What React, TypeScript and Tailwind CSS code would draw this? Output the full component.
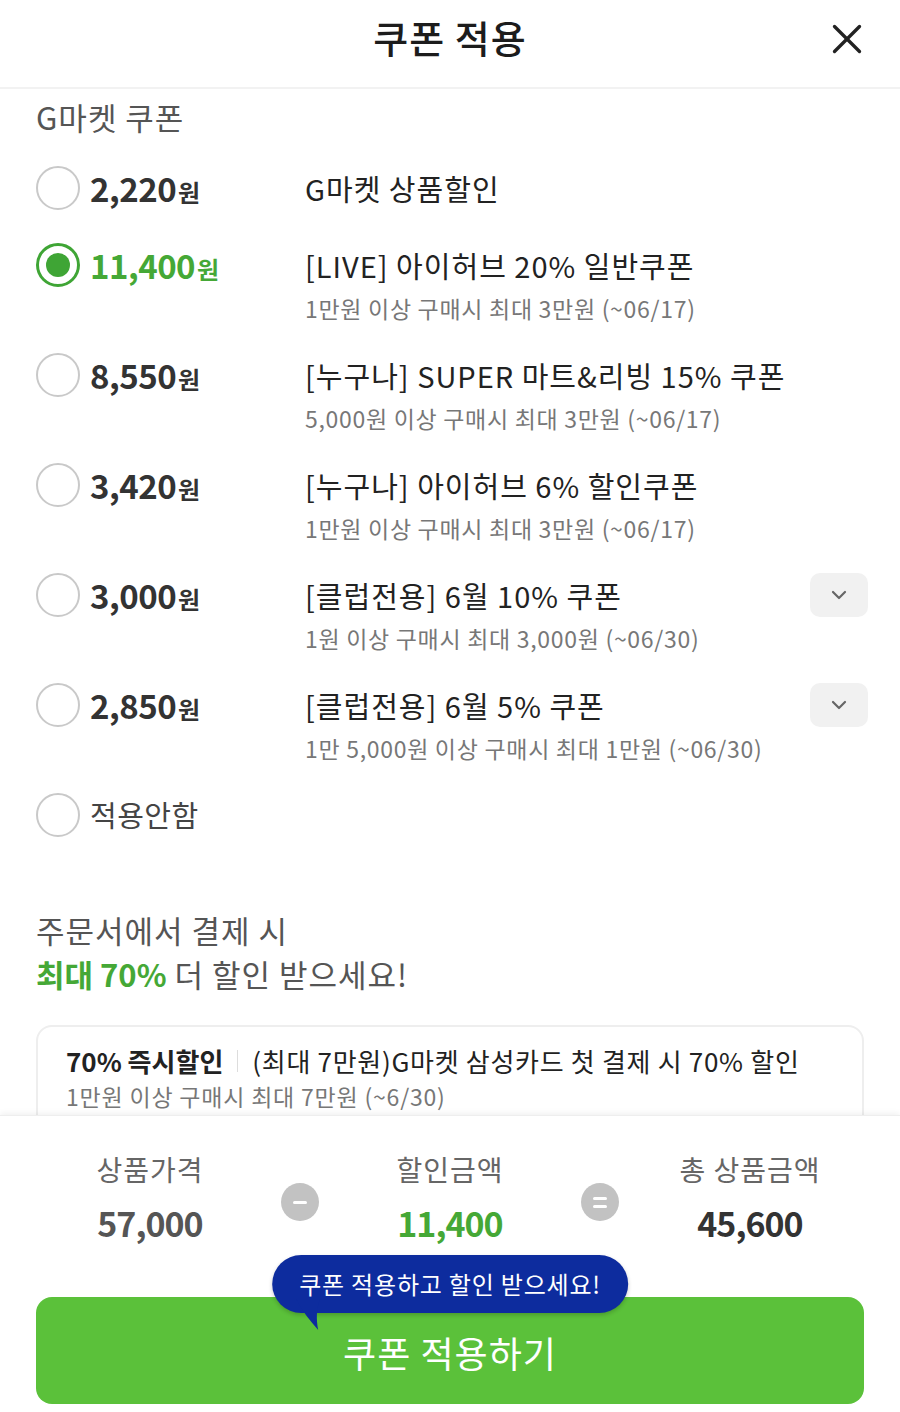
import { X, ChevronDown } from 'lucide-react';

const font = { fontFamily: '"Noto Sans CJK KR", "Noto Sans", sans-serif' };

type Coupon = {
    amount: string;
    title: string;
    sub?: string;
    selected?: boolean;
    expandable?: boolean;
};

const coupons: Coupon[] = [
    { amount: '2,220', title: 'G마켓 상품할인' },
    { amount: '11,400', title: '[LIVE] 아이허브 20% 일반쿠폰', sub: '1만원 이상 구매시 최대 3만원 (~06/17)', selected: true },
    { amount: '8,550', title: '[누구나] SUPER 마트&리빙 15% 쿠폰', sub: '5,000원 이상 구매시 최대 3만원 (~06/17)' },
    { amount: '3,420', title: '[누구나] 아이허브 6% 할인쿠폰', sub: '1만원 이상 구매시 최대 3만원 (~06/17)' },
    { amount: '3,000', title: '[클럽전용] 6월 10% 쿠폰', sub: '1원 이상 구매시 최대 3,000원 (~06/30)', expandable: true },
    { amount: '2,850', title: '[클럽전용] 6월 5% 쿠폰', sub: '1만 5,000원 이상 구매시 최대 1만원 (~06/30)', expandable: true },
];

function Radio({ on }: { on?: boolean }) {
    if (on) {
        return (
            <div className="w-[44px] h-[44px] shrink-0 rounded-full border-[3px] border-[#3fa535] flex items-center justify-center">
                <div className="w-[24px] h-[24px] rounded-full bg-[#3fa535]" />
            </div>
        );
    }
    return <div className="w-[44px] h-[44px] shrink-0 rounded-full border-2 border-[#c9c9c9] bg-white" />;
}

function CouponRow({ c }: { c: Coupon }) {
    return (
        <div className={c.sub ? 'mb-[29px]' : 'mb-[33px]'}>
            <div className="flex items-center h-[44px]">
                <Radio on={c.selected} />
                <div className={`ml-[10px] w-[215px] shrink-0 flex items-baseline font-bold ${c.selected ? 'text-[#45a836]' : 'text-[#333]'}`}>
                    <span className="text-[33px] leading-none tracking-[-0.5px]">{c.amount}</span>
                    <span className="text-[24px] leading-none ml-[2px]">원</span>
                </div>
                <div className="flex-1 text-[29px] tracking-[1px] text-[#222] leading-none">{c.title}</div>
                {c.expandable && (
                    <div className="w-[58px] h-[44px] -mr-[4px] rounded-[10px] bg-[#f1f1f1] flex items-center justify-center">
                        <ChevronDown size={24} strokeWidth={2.2} className="text-[#666]" />
                    </div>
                )}
            </div>
            {c.sub && (
                <div className="ml-[269px] mt-[5px] text-[23px] tracking-[0.7px] leading-[32px] text-[#777]">{c.sub}</div>
            )}
        </div>
    );
}

function SumCol({ label, value, tone }: { label: string; value: string; tone: string }) {
    return (
        <div className="w-[262px] flex flex-col items-center">
            <div className="text-[28px] tracking-[1px] leading-[36px] text-[#666]">{label}</div>
            <div className={`mt-[18px] text-[34px] leading-[36px] font-bold tracking-[-1px] ${tone}`}>{value}</div>
        </div>
    );
}

function OpCircle({ sign }: { sign: 'minus' | 'equal' }) {
    return (
        <div className="w-[38px] h-[38px] shrink-0 rounded-full bg-[#c2c2c2] flex flex-col items-center justify-center gap-[5px] mt-[32px]">
            {sign === 'minus' ? (
                <div className="w-[14px] h-[3px] rounded bg-white" />
            ) : (
                <>
                    <div className="w-[14px] h-[3px] rounded bg-white" />
                    <div className="w-[14px] h-[3px] rounded bg-white" />
                </>
            )}
        </div>
    );
}

export default function App() {
    return (
        <div style={font} className="w-[900px] h-[1412px] bg-white flex flex-col overflow-hidden select-none">
            {/* header */}
            <header className="relative h-[89px] shrink-0 flex items-center justify-center border-b-2 border-[#f2f2f2] rounded-t-[28px]">
                <h1 className="text-[38px] font-medium text-[#1c1c1c] tracking-[1px] -mt-[14px]">쿠폰 적용</h1>
                <X size={50} strokeWidth={1.6} className="absolute right-[28px] top-[14px] text-[#222]" />
            </header>

            {/* scroll area */}
            <main className="flex-1 overflow-hidden px-[36px]">
                <div className="pt-[8px] text-[31px] tracking-[1px] leading-[40px] text-[#555]">G마켓 쿠폰</div>

                <div className="mt-[29px]">
                    {coupons.map((c) => (
                        <CouponRow key={c.amount} c={c} />
                    ))}
                    <div className="flex items-center h-[44px]">
                        <Radio />
                        <span className="ml-[10px] text-[29px] tracking-[0.5px] text-[#444]">적용안함</span>
                    </div>
                </div>

                <div className="mt-[71px] text-[31px] tracking-[1px] leading-[44px] text-[#555]">
                    <div>주문서에서 결제 시</div>
                    <div>
                        <span className="font-bold text-[#45a836] tracking-[0px]">최대 70%</span> 더 할인 받으세요!
                    </div>
                </div>

                <div className="mt-[29px] border-2 border-[#eeeeee] rounded-[16px] px-[28px] pt-[16px] pb-[20px]">
                    <div className="flex items-center text-[26px] tracking-[0.7px] leading-[36px] text-[#222]">
                        <span className="font-bold tracking-[0px]">70% 즉시할인</span>
                        <span className="mx-[14px] w-px h-[22px] bg-[#ddd]" />
                        <span>(최대 7만원)G마켓 삼성카드 첫 결제 시 70% 할인</span>
                    </div>
                    <div className="mt-[2px] text-[23px] tracking-[0.8px] leading-[30px] text-[#777]">1만원 이상 구매시 최대 7만원 (~6/30)</div>
                </div>
            </main>

            {/* summary + button */}
            <footer className="shrink-0 h-[297px] bg-white shadow-[0_-2px_6px_rgba(0,0,0,0.06)] border-t border-[#eee] px-[36px] pt-[35px]">
                <div className="flex items-start justify-center -mx-[36px]">
                    <SumCol label="상품가격" value="57,000" tone="text-[#555]" />
                    <OpCircle sign="minus" />
                    <SumCol label="할인금액" value="11,400" tone="text-[#45a836]" />
                    <OpCircle sign="equal" />
                    <SumCol label="총 상품금액" value="45,600" tone="text-[#333]" />
                </div>

                <div className="relative mt-[56px]">
                    <button className="w-full h-[107px] rounded-[16px] bg-[#5bc13a] text-white text-[36px] tracking-[1px] pt-[2px]">
                        쿠폰 적용하기
                    </button>
                    <div className="absolute left-1/2 -translate-x-1/2 -top-[42px]">
                        <div className="relative h-[58px] px-[27px] rounded-full bg-[#0d2c9e] text-white text-[24px] tracking-[0.8px] flex items-center whitespace-nowrap shadow-[0_2px_4px_rgba(0,0,0,0.2)]">
                            쿠폰 적용하고 할인 받으세요!
                            <svg className="absolute left-[22px] top-[44px]" width="30" height="32" viewBox="0 0 30 32">
                                <path d="M2 0 C8 12 16 22 24 31 C22 20 22 10 26 0 Z" fill="#0d2c9e" />
                            </svg>
                        </div>
                    </div>
                </div>
            </footer>
        </div>
    );
}
